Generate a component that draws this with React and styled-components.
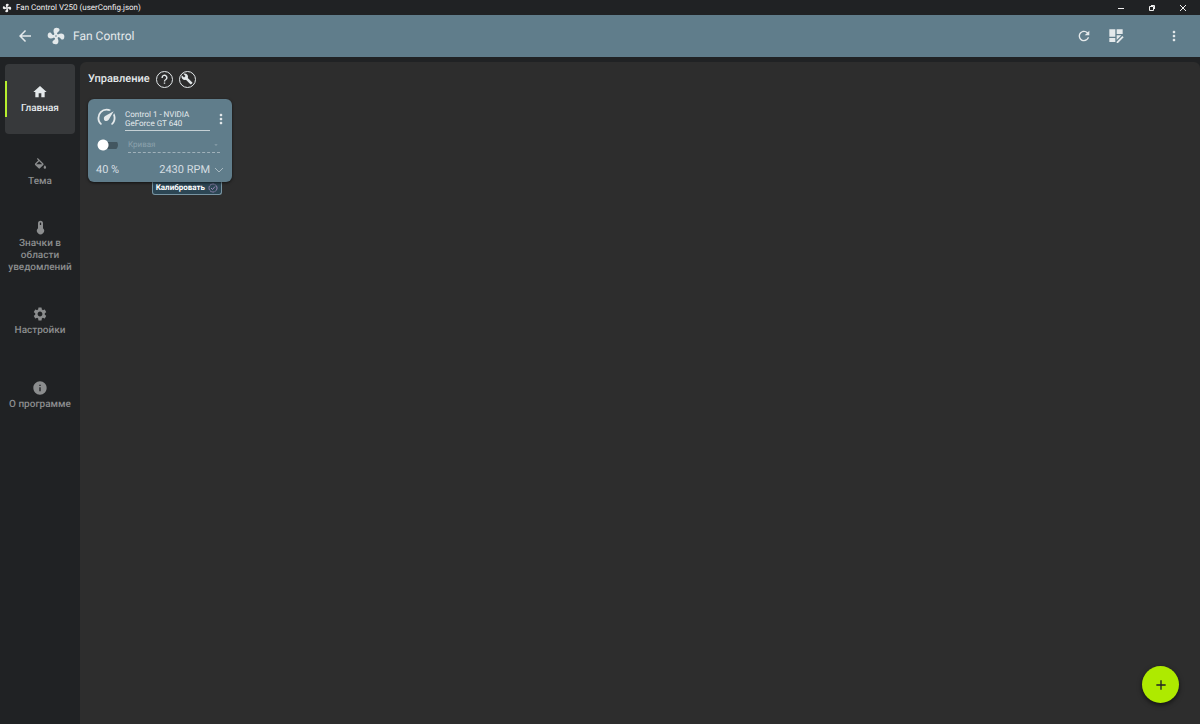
import React from "react"
import styled, { createGlobalStyle } from "styled-components"
import {
  MdHome,
  MdSettings,
  MdInfo,
  MdRefresh,
  MdMoreVert,
  MdArrowBack,
  MdBuild,
  MdAdd,
  MdArrowDropDown,
} from "react-icons/md"

const colors = {
  window: "#202224",
  panel: "#2d2d2d",
  steel: "#607d8b",
  lime: "#aeea00",
  text: "#e4e9eb",
  muted: "#8b8d8e",
}

const GlobalStyle = createGlobalStyle`
  * {
    box-sizing: border-box;
  }
  body {
    margin: 0;
    background: ${colors.window};
    color: ${colors.text};
    font-family: Roboto, "Liberation Sans", sans-serif;
    text-rendering: geometricPrecision;
  }
  button, select, input {
    font-family: inherit;
    color: inherit;
    text-rendering: inherit;
  }
  svg {
    display: block;
  }
`

const Window = styled.div`
  min-height: 100vh;
  display: flex;
  flex-direction: column;
`
const TitleBar = styled.div`
  height: 15px;
  display: flex;
  align-items: center;
  justify-content: space-between;
  padding: 0 8px 0 2px;
  font-size: 8px;
  line-height: 15px;
  color: #f0f0f0;
`
const TitleText = styled.div`
  display: flex;
  align-items: center;
  gap: 4px;
`
const WindowButtons = styled.div`
  display: flex;
  gap: 13px;
`
const IconButton = styled.button`
  display: flex;
  align-items: center;
  justify-content: center;
  flex: none;
  width: ${(props) => props.$size}px;
  height: ${(props) => props.$size}px;
  padding: 0;
  border: ${(props) => (props.$ring ? "1px solid #e4e9eb" : "0")};
  border-radius: 50%;
  background: none;
  cursor: pointer;
  svg {
    flex: none;
  }
`
const AppBar = styled.header`
  height: 42px;
  display: flex;
  align-items: center;
  justify-content: space-between;
  padding: 0 17px 0 16px;
  background: ${colors.steel};
`
const Brand = styled.div`
  display: flex;
  align-items: center;
`
const BrandIcon = styled.span`
  margin: 0 7px 0 12px;
`
const AppName = styled.h1`
  margin: 0;
  font-size: 12px;
  line-height: 18px;
  font-weight: 400;
`
const Actions = styled.div`
  display: flex;
  align-items: center;
  gap: 14px;
`
const MenuSlot = styled.div`
  margin-left: 26px;
`
const Body = styled.div`
  flex: 1;
  display: flex;
`
const Sidebar = styled.nav`
  width: 80px;
  flex: none;
  display: flex;
  flex-direction: column;
  gap: 4px;
  padding: 7px 5px;
`
const NavItem = styled.a`
  height: 70px;
  display: flex;
  flex-direction: column;
  align-items: center;
  justify-content: center;
  gap: 3px;
  position: relative;
  border-radius: 4px;
  background: ${(props) => (props.$active ? "#37393b" : "none")};
  color: ${(props) => (props.$active ? colors.text : colors.muted)};
  font-size: 10px;
  line-height: 12px;
  font-weight: 500;
  text-align: center;
  text-decoration: none;
  &::before {
    content: "";
    display: ${(props) => (props.$active ? "block" : "none")};
    position: absolute;
    left: 0;
    top: 17px;
    bottom: 17px;
    width: 2px;
    background: #b6ee2e;
  }
`
const Content = styled.main`
  flex: 1;
  margin: 5px 0 0;
  padding: 8px;
  border-radius: 6px 6px 0 0;
  background: ${colors.panel};
`
const SectionHead = styled.div`
  display: flex;
  align-items: center;
  gap: 6px;
  margin-bottom: 11px;
`
const SectionTitle = styled.h2`
  margin: 0;
  font-size: 11px;
  line-height: 18px;
  font-weight: 500;
`
const CardSlot = styled.div`
  width: 144px;
`
const Card = styled.section`
  position: relative;
  z-index: 1;
  padding: 8px 8px 5px;
  border-radius: 6px;
  background: ${colors.steel};
  box-shadow: 0 1px 3px rgba(0, 0, 0, 0.6);
`
const CardTop = styled.div`
  display: flex;
  align-items: center;
  gap: 8px;
  > svg {
    align-self: flex-start;
  }
`
const CardName = styled.div`
  flex: 1;
  padding: 3px 0 2px;
  border-bottom: 1px solid #c5d0d5;
  font-size: 8px;
  line-height: 9px;
`
const CurveRow = styled.div`
  display: flex;
  align-items: center;
  gap: 10px;
  padding: 6px 4px 10px 1px;
`
const Toggle = styled.input`
  appearance: none;
  flex: none;
  width: 21px;
  height: 12px;
  margin: 0;
  border-radius: 6px;
  background:
    radial-gradient(circle at 6px 6px, #fff 5px, transparent 6px),
    linear-gradient(#425660, #425660) 6px 3px / 15px 7px no-repeat;
`
const CurveField = styled.div`
  flex: 1;
  display: flex;
  align-items: center;
  border-bottom: 1px dashed #a0b1ba;
  color: #8ba1ab;
`
const CurveSelect = styled.select`
  appearance: none;
  flex: 1;
  min-width: 0;
  height: 15px;
  padding: 0;
  border: 0;
  background: none;
  font-size: 8px;
  opacity: 1;
`
const Readings = styled.div`
  display: flex;
  align-items: center;
  justify-content: space-between;
  color: #d5dee2;
  font-size: 11px;
  line-height: 14px;
`
const Speed = styled.div`
  display: flex;
  align-items: center;
  gap: 4px;
  button {
    color: #a9bac2;
  }
`
const Calibrate = styled.button`
  display: flex;
  align-items: center;
  gap: 3px;
  height: 13px;
  margin: 0 10px 0 auto;
  padding: 0 3px;
  border: 1px solid #7894a2;
  border-top: 0;
  border-radius: 0 0 3px 3px;
  background: #2c4654;
  color: #fff;
  font-size: 8px;
  line-height: 12px;
  font-weight: 700;
`
const AddButton = styled.button`
  position: fixed;
  right: 21px;
  bottom: 21px;
  width: 37px;
  height: 37px;
  display: flex;
  align-items: center;
  justify-content: center;
  padding: 0;
  border: 0;
  border-radius: 50%;
  background: ${colors.lime};
  color: #202224;
  box-shadow: 0 2px 5px rgba(0, 0, 0, 0.6);
`

const Icon = ({ size, d }) => (
  <svg width={size} height={size} viewBox="0 0 24 24" fill="currentColor" aria-hidden="true">
    <path fillRule="evenodd" d={d} />
  </svg>
)

const fan =
  "M12,11A1,1 0 0,0 11,12A1,1 0 0,0 12,13A1,1 0 0,0 13,12A1,1 0 0,0 12,11M12.5,2C17,2 17.11,5.57 14.75,6.75C13.76,7.24 13.32,8.29 13.13,9.22C13.61,9.42 14.03,9.73 14.35,10.13C18.05,8.13 22.03,8.92 22.03,12.5C22.03,17 18.46,17.1 17.28,14.73C16.78,13.74 15.72,13.3 14.79,13.11C14.59,13.59 14.28,14 13.88,14.34C15.87,18.03 15.08,22 11.5,22C7,22 6.91,18.42 9.27,17.24C10.25,16.75 10.69,15.71 10.89,14.79C10.4,14.59 9.97,14.27 9.65,13.87C5.96,15.85 2,15.07 2,11.5C2,7 5.56,6.89 6.74,9.26C7.24,10.25 8.29,10.68 9.22,10.87C9.41,10.39 9.73,9.97 10.14,9.65C8.15,5.96 8.94,2 12.5,2Z"
const gauge =
  "M12,16A3,3 0 0,1 9,13C9,11.88 9.61,10.9 10.5,10.39L20.21,4.77L14.68,14.35C14.18,15.33 13.17,16 12,16M12,2C13.9,2 15.7,2.5 17.2,3.4L15.2,4.6C14.2,4.2 13.1,4 12,4A8.4,8.4 0 0,0 3.8,12.5C3.8,14.9 4.7,17 6.3,18.5C6.74,19.04 6.74,19.67 6.35,20.06C5.96,20.45 5.32,20.45 4.93,20.07C2.9,18.2 1.7,15.5 1.7,12.5A10.3,10.5 0 0,1 12,2M22.3,12.5C22.3,15.5 21.1,18.2 19.07,20.07C18.68,20.45 18.05,20.45 17.66,20.06C17.27,19.67 17.27,19.04 17.7,18.5C19.3,17 20.2,14.9 20.2,12.5C20.2,11.4 20,10.4 19.6,9.5L20.7,7.2C21.7,8.8 22.3,10.6 22.3,12.5Z"
const bucket =
  "M19 11.5S17 13.67 17 15A2 2 0 0 0 21 15C21 13.67 19 11.5 19 11.5M5.21 10L10 5.21L14.79 10M16.56 8.94L7.62 0L6.21 1.41L8.59 3.79L3.44 8.94C2.85 9.5 2.85 10.47 3.44 11.06L8.94 16.56C9.23 16.85 9.62 17 10 17S10.77 16.85 11.06 16.56L16.56 11.06C17.15 10.47 17.15 9.5 16.56 8.94Z"
const thermometer =
  "M16 13V5A4 4 0 0 0 8 5V13A5.7 5.7 0 1 0 16 13M12 4A1 1 0 0 1 13 5V8H11V5A1 1 0 0 1 12 4Z"
const dashboardEdit =
  "M2 2H11V13H2V2M2 15H11V21H2V15M13 2H22V9H13V2M13 11H20L13 18V11M21.5 12L23.5 14L15 22.5H13V20.5L21.5 12Z"

// thin strokes for the window controls
const Stroke = ({ size, d, width = 1 }) => (
  <svg width={size} height={size} viewBox={`0 0 ${size} ${size}`} fill="none" stroke="currentColor" strokeWidth={width} aria-hidden="true">
    <path d={d} />
  </svg>
)

const pages = [
  { name: "Главная", icon: <MdHome size={16} />, active: true },
  { name: "Тема", icon: <Icon size={15} d={bucket} /> },
  { name: "Значки в области уведомлений", icon: <Icon size={15} d={thermometer} /> },
  { name: "Настройки", icon: <MdSettings size={16} /> },
  { name: "О программе", icon: <MdInfo size={16} /> },
]

const ControlCard = () => (
  <CardSlot>
    <Card>
      <CardTop>
        <Icon size={21} d={gauge} />
        <CardName>
          Control 1 - NVIDIA
          <br />
          GeForce GT 640
        </CardName>
        <IconButton $size={6} aria-label="Меню карточки">
          <MdMoreVert size={16} />
        </IconButton>
      </CardTop>
      <CurveRow>
        <Toggle type="checkbox" role="switch" aria-label="Включить" />
        <CurveField>
          <CurveSelect aria-label="Кривая" disabled>
            <option>Кривая</option>
          </CurveSelect>
          <MdArrowDropDown size={8} />
        </CurveField>
      </CurveRow>
      <Readings>
        <span>40 %</span>
        <Speed>
          2430 RPM
          <IconButton $size={10} aria-label="Развернуть">
            <Stroke size={10} d="M1 3L5 7L9 3" />
          </IconButton>
        </Speed>
      </Readings>
    </Card>
    <Calibrate>
      Калибровать
      <svg width="10" height="10" viewBox="0 0 20 20" fill="none" stroke="#9987b5" strokeWidth="2" aria-hidden="true">
        <circle cx="10" cy="10" r="8" strokeDasharray="4 1" />
        <path d="M6 10L9 13L14 7" />
      </svg>
    </Calibrate>
  </CardSlot>
)

const App = () => (
  <Window>
    <GlobalStyle />
    <TitleBar>
      <TitleText>
        <Icon size={10} d={fan} />
        Fan Control V250 (userConfig.json)
      </TitleText>
      <WindowButtons>
        <IconButton $size={18} aria-label="Свернуть">
          <Stroke size={8} d="M1 4.5H7" />
        </IconButton>
        <IconButton $size={18} aria-label="Восстановить">
          <Stroke size={8} d="M1.5 2.5H5.5V6.5H1.5ZM3 1.5H6.5V5" />
        </IconButton>
        <IconButton $size={18} aria-label="Закрыть">
          <Stroke size={8} d="M1 1L7 7M7 1L1 7" />
        </IconButton>
      </WindowButtons>
    </TitleBar>
    <AppBar>
      <Brand>
        <IconButton $size={18} aria-label="Назад">
          <MdArrowBack size={18} />
        </IconButton>
        <BrandIcon>
          <Icon size={20} d={fan} />
        </BrandIcon>
        <AppName>Fan Control</AppName>
      </Brand>
      <Actions>
        <IconButton $size={18} aria-label="Обновить">
          <MdRefresh size={16} />
        </IconButton>
        <IconButton $size={18} aria-label="Изменить макет">
          <Icon size={16} d={dashboardEdit} />
        </IconButton>
        <MenuSlot>
          <IconButton $size={18} aria-label="Меню">
            <MdMoreVert size={16} />
          </IconButton>
        </MenuSlot>
      </Actions>
    </AppBar>
    <Body>
      <Sidebar>
        {pages.map((page) => (
          <NavItem key={page.name} href="#" $active={page.active}>
            {page.icon}
            {page.name}
          </NavItem>
        ))}
      </Sidebar>
      <Content>
        <SectionHead>
          <SectionTitle>Управление</SectionTitle>
          <IconButton $size={17} $ring aria-label="Справка">
            <Stroke size={11} width={1.4} d="M3.2 4A2.3 2.3 0 1 1 6.8 5.5Q5.5 6.3 5.5 7.4M5.5 8.4V9.8" />
          </IconButton>
          <IconButton $size={17} $ring aria-label="Настроить">
            <MdBuild size={12} />
          </IconButton>
        </SectionHead>
        <ControlCard />
      </Content>
    </Body>
    <AddButton aria-label="Добавить">
      <MdAdd size={16} />
    </AddButton>
  </Window>
)

export default App
